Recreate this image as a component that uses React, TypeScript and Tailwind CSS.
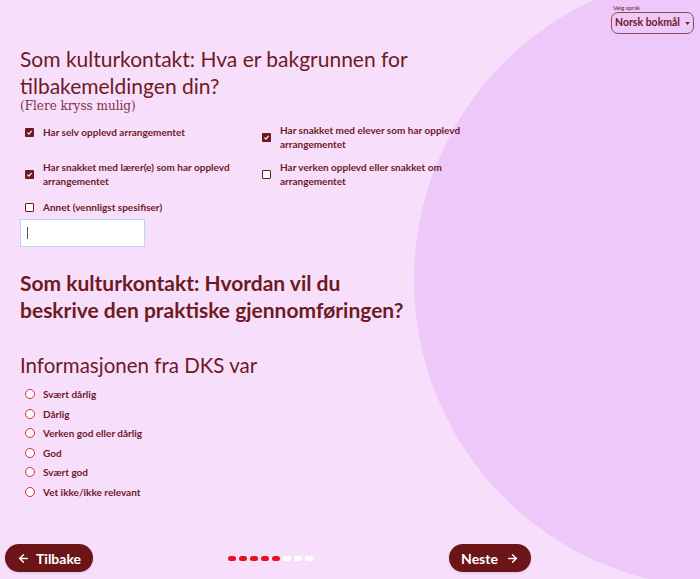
import { ArrowLeft, ArrowRight } from "lucide-react";

const sans = { fontFamily: 'Lato, "Noto Sans", sans-serif' };
const serif = { fontFamily: '"DejaVu Serif", "Liberation Serif", serif' };

const checks = [
  { lines: ["Har selv opplevd arrangementet"], checked: true },
  { lines: ["Har snakket med elever som har opplevd", "arrangementet"], checked: true },
  { lines: ["Har snakket med lærer(e) som har opplevd", "arrangementet"], checked: true },
  { lines: ["Har verken opplevd eller snakket om", "arrangementet"], checked: false },
];

const options = [
  "Svært dårlig",
  "Dårlig",
  "Verken god eller dårlig",
  "God",
  "Svært god",
  "Vet ikke/ikke relevant",
];

function Box({ checked }: { checked: boolean }) {
  return checked ? (
    <span className="flex h-[9px] w-[9px] shrink-0 items-center justify-center rounded-[1px] bg-[#6e1a1f]">
      <svg viewBox="0 0 10 10" className="h-[7px] w-[7px]">
        <path d="M2 5.2 4.2 7.3 8 2.8" fill="none" stroke="white" strokeWidth="1.6" />
      </svg>
    </span>
  ) : (
    <span className="h-[9px] w-[9px] shrink-0 rounded-[1px] border border-[#6e1a1f] bg-white" />
  );
}

export default function App() {
  return (
    <div className="relative h-[579px] w-[700px] overflow-hidden bg-[#f7dffc] text-[#6e1a1f]" style={sans}>
      {/* background blob */}
      <div className="absolute left-[414px] top-[-28px] h-[616px] w-[616px] rounded-full bg-[#edc8f8]" />

      <div className="relative flex h-full flex-col">
        <div className="flex justify-end pr-[6px] pt-[4px]">
          <div className="flex flex-col">
            <span className="pl-[2px] text-[6px] leading-[8px]">Velg språk</span>
            <button className="flex h-[22px] w-[83px] items-center justify-center gap-[5px] whitespace-nowrap rounded-[7px] border border-[#8a4a5a] text-[10.5px] font-bold">
              Norsk bokmål
              <svg viewBox="0 0 6 4" className="h-[3px] w-[5px]">
                <path d="M0 0h6L3 4z" fill="#6e1a1f" />
              </svg>
            </button>
          </div>
        </div>

        <div className="px-[20px]">
          <h1 className="mt-[11px] whitespace-nowrap text-[21px] leading-[27px]">
            Som kulturkontakt: Hva er bakgrunnen for
            <br />
            tilbakemeldingen din?
          </h1>
          <p className="text-[12px] leading-[15px] text-[#7d3340]" style={serif}>
            (Flere kryss mulig)
          </p>

          <div className="mt-[9px] grid w-[460px] grid-cols-2 items-start gap-x-[19px] gap-y-[9px] pl-[5px] text-[10px] font-bold leading-[14px]">
            {checks.map((c, i) => (
              <label key={i} className={`flex items-center gap-[9px] ${i === 0 ? "mt-[2px]" : ""}`}>
                <Box checked={c.checked} />
                <span className="whitespace-nowrap">
                  {c.lines[0]}
                  {c.lines[1] && (
                    <>
                      <br />
                      {c.lines[1]}
                    </>
                  )}
                </span>
              </label>
            ))}
            <label className="mt-[3px] flex items-center gap-[9px]">
              <Box checked={false} />
              <span>Annet (vennligst spesifiser)</span>
            </label>
          </div>

          <div className="mt-[5px] flex h-[28px] w-[125px] items-center border border-[#b8d6f5] bg-white pl-[6px]">
            <span className="h-[12px] w-px bg-[#555]" />
          </div>

          <h2 className="mt-[22px] whitespace-nowrap text-[21px] font-bold leading-[27px]">
            Som kulturkontakt: Hvordan vil du
            <br />
            beskrive den praktiske gjennomføringen?
          </h2>

          <h3 className="mt-[29px] text-[20.5px] leading-[27px]">Informasjonen fra DKS var</h3>

          <ul className="mt-[8px] flex flex-col gap-[5px] pl-[5px] text-[10px] font-bold leading-[14.5px]">
            {options.map((o) => (
              <li key={o} className="flex items-center gap-[8px]">
                <span className="h-[10px] w-[10px] rounded-full border-[1.5px] border-[#e0283a] bg-white" />
                {o}
              </li>
            ))}
          </ul>
        </div>

        <div className="mt-auto mb-[7px] flex items-center px-[5px]">
          <button className="flex h-[28px] w-[88px] items-center justify-center gap-[6px] rounded-full bg-[#6b1518] text-[14px] font-bold text-white shadow">
            <ArrowLeft className="h-[13px] w-[13px]" strokeWidth={2.5} />
            Tilbake
          </button>
          <div className="ml-[135px] flex gap-[3px]">
            {[0, 1, 2, 3, 4, 5, 6, 7].map((i) => (
              <span
                key={i}
                className={`h-[5px] w-[8px] rounded-full ${i < 5 ? "bg-[#e8101c]" : "bg-white"}`}
              />
            ))}
          </div>
          <button className="ml-[136px] flex h-[28px] w-[82px] items-center justify-center gap-[8px] rounded-full bg-[#6b1518] text-[14px] font-bold text-white shadow">
            Neste
            <ArrowRight className="h-[13px] w-[13px]" strokeWidth={2.5} />
          </button>
        </div>
      </div>
    </div>
  );
}
